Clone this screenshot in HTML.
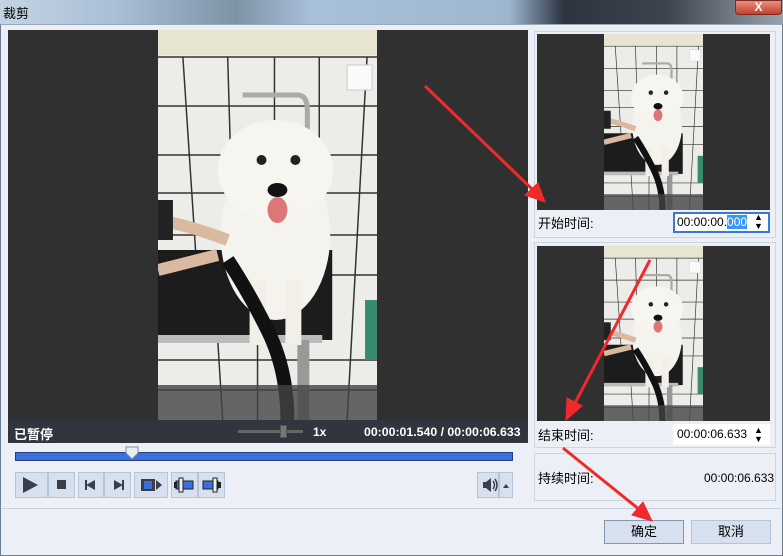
<!DOCTYPE html>
<html><head><meta charset="utf-8">
<style>
*{margin:0;padding:0;box-sizing:border-box}
body{width:783px;height:556px;overflow:hidden;position:relative;font-family:"Liberation Sans","Noto Sans CJK SC",sans-serif;font-size:12px;color:#000;background:#8fa9c4}
.abs{position:absolute}
.title{left:0;top:0;width:783px;height:24px;background:linear-gradient(90deg,#c4d3e2 0%,#a9bfd6 15%,#7f93a6 30%,#a8c0da 40%,#9eb6d0 65%,#2c3440 72%,#3b444e 85%,#9aa3aa 100%)}
.win{left:0;top:24px;width:783px;height:532px;background:#eceff5;border:1px solid #6d7f93;border-top:1px solid #9aa9ba}
.btn{background:#d7e0ee;border:1px solid #b7c4d8}
.dark{background:#303030}
.cap{font-size:13px}
</style></head><body>
<svg width="0" height="0" style="position:absolute">
<defs>
<symbol id="scene" viewBox="0 0 220 390" preserveAspectRatio="none">
<rect width="220" height="390" fill="#ecece8"/>
<rect width="220" height="25" fill="#e8e4d2"/>
<g stroke="#333" stroke-width="1.5" fill="none">
<path d="M0 27H220M0 76H220M0 125H220M0 163H220M0 205H220M0 245H220M0 330H220M0 360H220"/>
<path d="M25 27L43 300M70 27L78 300M117 27V300M162 27V300M210 27L190 390M60 310L65 390M100 310V390M150 310V390"/>
</g>
<rect x="0" y="220" width="175" height="90" fill="#1c1c1c"/>
<rect x="0" y="305" width="165" height="8" fill="#bbb"/>
<path d="M85 65H140Q150 65 150 80V265" stroke="#aaa" stroke-width="5" fill="none"/>
<rect x="140" y="310" width="12" height="80" fill="#999"/>
<ellipse cx="118" cy="205" rx="55" ry="85" fill="#f5f3ee"/>
<ellipse cx="118" cy="140" rx="58" ry="50" fill="#f7f5f0"/>
<rect x="92" y="250" width="16" height="65" fill="#f2efe8"/>
<rect x="128" y="250" width="16" height="65" fill="#f2efe8"/>
<circle cx="104" cy="130" r="5" fill="#222"/><circle cx="138" cy="130" r="5" fill="#222"/>
<ellipse cx="120" cy="160" rx="10" ry="7" fill="#111"/>
<ellipse cx="120" cy="180" rx="10" ry="13" fill="#d77"/>
<path d="M70 230Q90 260 110 300T130 390" stroke="#111" stroke-width="14" fill="none"/>
<path d="M0 190Q30 195 70 210M0 240Q40 230 60 225" stroke="#d9b9a0" stroke-width="12" fill="none"/>
<rect x="0" y="170" width="15" height="40" fill="#222"/>
<rect x="0" y="355" width="220" height="35" fill="#444" opacity=".8"/>
<rect x="208" y="270" width="12" height="60" fill="#3a8a70"/>
<rect x="190" y="35" width="25" height="25" fill="#fafafa" stroke="#ccc"/>
</symbol>
</defs></svg>

<div class="abs title"><div class="abs" style="left:3px;top:3px;font-size:13px">裁剪</div>
<div class="abs" style="left:735px;top:0;width:47px;height:15px;background:linear-gradient(#e2917f,#c7402b);border:1px solid #7a2a20;border-radius:0 0 4px 4px;color:#fff;font-weight:bold;text-align:center;line-height:13px;font-size:12px">X</div></div>
<div class="abs win"></div>

<div class="abs dark" style="left:8px;top:30px;width:520px;height:390px"></div>
<svg class="abs" style="left:158px;top:30px" width="219" height="390"><use href="#scene" width="219" height="390"/></svg>
<div class="abs" style="left:8px;top:420px;width:520px;height:23px;background:#31353d;color:#fff;font-weight:bold">
<div class="abs" style="left:6px;top:4px;font-size:13px">已暂停</div>
<div class="abs" style="left:230px;top:10px;width:65px;height:3px;background:#666"></div>
<div class="abs" style="left:272px;top:5px;width:7px;height:13px;background:#777;border:1px solid #555"></div>
<div class="abs" style="left:305px;top:5px">1x</div>
<div class="abs" style="left:356px;top:5px;font-size:12.3px">00:00:01.540 / 00:00:06.633</div>
</div>
<div class="abs" style="left:15px;top:452px;width:498px;height:9px;background:#3b6fdc;border:1px solid #243f80"></div>
<svg class="abs" style="left:125px;top:446px" width="14" height="14"><path d="M1 1H13V7L7 13L1 7Z" fill="#e8ecf4" stroke="#8090a8"/></svg>

<div class="abs btn" style="left:15px;top:472px;width:33px;height:26px"></div>
<div class="abs btn" style="left:48px;top:472px;width:27px;height:26px"></div>
<div class="abs btn" style="left:78px;top:472px;width:26px;height:26px"></div>
<div class="abs btn" style="left:104px;top:472px;width:27px;height:26px"></div>
<div class="abs btn" style="left:134px;top:472px;width:34px;height:26px"></div>
<div class="abs btn" style="left:171px;top:472px;width:27px;height:26px"></div>
<div class="abs btn" style="left:198px;top:472px;width:27px;height:26px"></div>
<div class="abs btn" style="left:477px;top:472px;width:22px;height:26px"></div>
<div class="abs btn" style="left:499px;top:472px;width:14px;height:26px"></div>
<svg class="abs" style="left:0;top:0" width="530" height="510">
<path d="M23 477V493L38 485Z" fill="#3a3e48"/>
<rect x="57" y="480" width="9" height="9" fill="#3a3e48"/>
<path d="M85 480V490H87V485.5L95 490V480L87 484.5V480Z" fill="#3a3e48"/>
<path d="M124 480V490H122V485.5L114 490V480L122 484.5V480Z" fill="#3a3e48"/>
<rect x="141" y="479" width="14" height="12" fill="#3a3e48"/><rect x="144" y="481" width="8" height="8" fill="#3b6fdc"/><path d="M156 480V490L162 485Z" fill="#3a3e48"/>
<rect x="176" y="481" width="17" height="8" fill="#3b6fdc" stroke="#222"/><rect x="179" y="478" width="4" height="14" fill="#eee" stroke="#222"/><rect x="174" y="482" width="3" height="6" fill="#222"/>
<rect x="203" y="481" width="15" height="8" fill="#3b6fdc" stroke="#222"/><rect x="213" y="478" width="4" height="14" fill="#eee" stroke="#222"/><rect x="218" y="482" width="3" height="6" fill="#222"/>
<path d="M483 482H486L491 478V492L486 488H483Z" fill="#3a3e48"/><path d="M493 481Q496 485 493 489M495 479Q499 485 495 491" stroke="#3a3e48" stroke-width="1.5" fill="none"/>
<path d="M503 488L506 484L509 488Z" fill="#3a3e48"/>
</svg>
<div class="abs" style="left:2px;top:508px;width:779px;height:1px;background:#c8d0dc"></div>

<div class="abs" style="left:534px;top:31px;width:242px;height:207px;border:1px solid #cdd5e2;background:#eceff5"></div>
<div class="abs dark" style="left:537px;top:34px;width:233px;height:176px"></div>
<svg class="abs" style="left:604px;top:34px" width="99" height="176"><use href="#scene" width="99" height="176"/></svg>
<div class="abs cap" style="left:538px;top:213px">开始时间:</div>
<div class="abs" style="left:673px;top:212px;width:97px;height:21px;background:#fff;border:2px solid #3a78d8"></div>
<div class="abs" style="left:677px;top:215px">00:00:00.<span style="background:#3399ff;color:#fff">000</span></div>
<div class="abs" style="left:754px;top:213px;font-size:9px;line-height:9px">▲<br>▼</div>

<div class="abs" style="left:534px;top:242px;width:242px;height:206px;border:1px solid #cdd5e2"></div>
<div class="abs dark" style="left:537px;top:246px;width:233px;height:175px"></div>
<svg class="abs" style="left:604px;top:246px" width="99" height="175"><use href="#scene" width="99" height="175"/></svg>
<div class="abs cap" style="left:538px;top:425px">结束时间:</div>
<div class="abs" style="left:673px;top:424px;width:97px;height:21px;background:#fff"></div>
<div class="abs" style="left:677px;top:427px">00:00:06.633</div>
<div class="abs" style="left:754px;top:426px;font-size:9px;line-height:9px">▲<br>▼</div>

<div class="abs" style="left:534px;top:453px;width:242px;height:48px;border:1px solid #cdd5e2"></div>
<div class="abs cap" style="left:538px;top:468px">持续时间:</div>
<div class="abs" style="left:704px;top:471px">00:00:06.633</div>

<div class="abs btn" style="left:604px;top:520px;width:80px;height:24px;border-color:#8797b0;text-align:center;line-height:22px;font-size:13px">确定</div>
<div class="abs btn" style="left:691px;top:520px;width:80px;height:24px;text-align:center;line-height:22px;font-size:13px">取消</div>

<svg class="abs" style="left:0;top:0" width="783" height="556">
<g fill="#f02a2a" stroke="#f02a2a">
<path d="M425 86L532 189" stroke-width="3"/><path d="M545 202L525 195L538 183Z"/>
<path d="M650 260L574 405" stroke-width="3"/><path d="M566 420L567 398L582 406Z"/>
<path d="M563 448L640 510" stroke-width="3"/><path d="M652 521L632 515L643 502Z"/>
</g></svg>
</body></html>
